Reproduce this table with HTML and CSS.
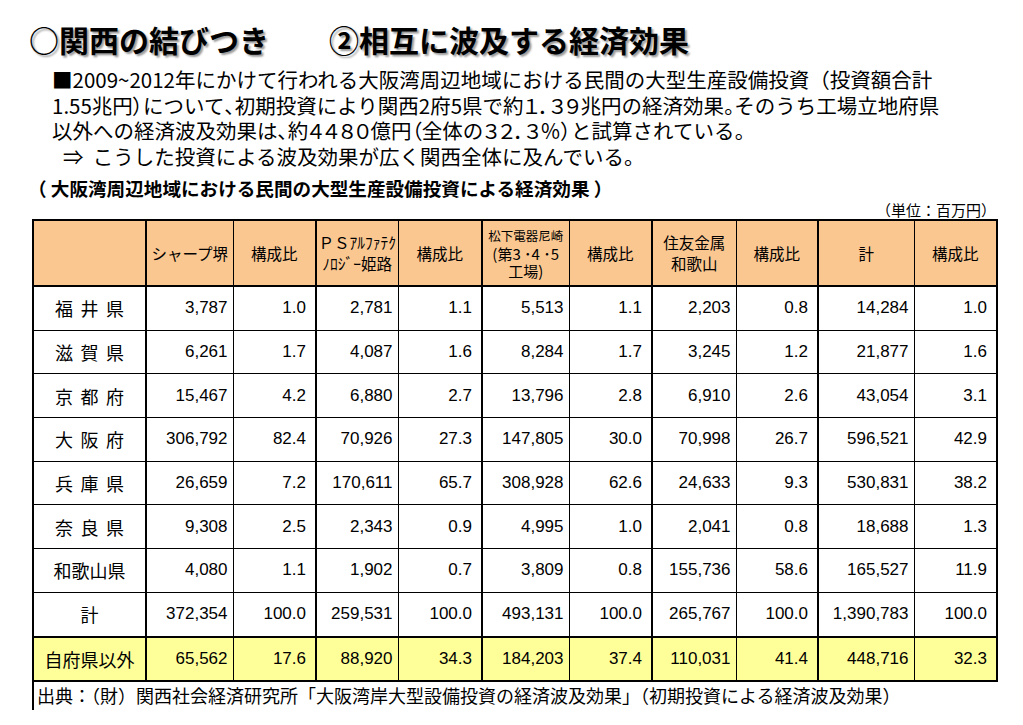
FILE: index.html
```html
<!DOCTYPE html>
<html lang="ja">
<head>
<meta charset="utf-8">
<title>関西の結びつき</title>
<link rel="stylesheet" href="styles.css">
</head>
<body>
<div class="slide">
  <h1 class="title">○関西の結びつき　　②相互に波及する経済効果</h1>
  <div class="lead">
    <p>■2009~2012年にかけて行われる大阪湾周辺地域における民間の大型生産設備投資（投資額合計</p>
    <p>1.55兆円<span class="pa">）</span>について<span class="pa">、</span>初期投資により関西2府5県で約<span class="pa">１．３９</span>兆円の経済効果<span class="pa">。</span>そのうち工場立地府県</p>
    <p>以外への経済波及効果は<span class="pa">、</span>約<span class="pa">４４８０</span>億円<span class="pa">（</span>全体の<span class="pa">３２．３％）</span>と試算されている<span class="pa">。</span></p>
    <p class="arrow">⇒&nbsp; こうした投資による波及効果が広く関西全体に及んでいる。</p>
  </div>
  <div class="caption">（ 大阪湾周辺地域における民間の大型生産設備投資による経済効果 ）</div>
  <div class="tablewrap">
    <div class="unit">（単位：百万円）</div>
    <table class="data">
      <colgroup>
        <col class="c-label"><col class="c-a"><col class="c-b"><col class="c-c"><col class="c-d"><col class="c-e"><col class="c-f"><col class="c-g"><col class="c-h"><col class="c-i"><col class="c-j">
      </colgroup>
      <thead>
        <tr>
          <th></th>
          <th>シャープ堺</th>
          <th>構成比</th>
          <th class="ps">ＰＳｱﾙﾌｧﾃｸ<br>ﾉﾛｼﾞｰ姫路</th>
          <th>構成比</th>
          <th class="mat"><span class="m1">松下電器尼崎</span><span class="m2">(第3 ･4 ･5</span><span class="m2">工場)</span></th>
          <th>構成比</th>
          <th class="two">住友金属<br>和歌山</th>
          <th>構成比</th>
          <th>計</th>
          <th>構成比</th>
        </tr>
      </thead>
      <tbody>
        <tr><td class="lab sp">福井県</td><td>3,787</td><td class="r">1.0</td><td>2,781</td><td class="r">1.1</td><td>5,513</td><td class="r">1.1</td><td>2,203</td><td class="r">0.8</td><td>14,284</td><td class="r">1.0</td></tr>
        <tr><td class="lab sp">滋賀県</td><td>6,261</td><td class="r">1.7</td><td>4,087</td><td class="r">1.6</td><td>8,284</td><td class="r">1.7</td><td>3,245</td><td class="r">1.2</td><td>21,877</td><td class="r">1.6</td></tr>
        <tr><td class="lab sp">京都府</td><td>15,467</td><td class="r">4.2</td><td>6,880</td><td class="r">2.7</td><td>13,796</td><td class="r">2.8</td><td>6,910</td><td class="r">2.6</td><td>43,054</td><td class="r">3.1</td></tr>
        <tr><td class="lab sp">大阪府</td><td>306,792</td><td class="r">82.4</td><td>70,926</td><td class="r">27.3</td><td>147,805</td><td class="r">30.0</td><td>70,998</td><td class="r">26.7</td><td>596,521</td><td class="r">42.9</td></tr>
        <tr><td class="lab sp">兵庫県</td><td>26,659</td><td class="r">7.2</td><td>170,611</td><td class="r">65.7</td><td>308,928</td><td class="r">62.6</td><td>24,633</td><td class="r">9.3</td><td>530,831</td><td class="r">38.2</td></tr>
        <tr><td class="lab sp">奈良県</td><td>9,308</td><td class="r">2.5</td><td>2,343</td><td class="r">0.9</td><td>4,995</td><td class="r">1.0</td><td>2,041</td><td class="r">0.8</td><td>18,688</td><td class="r">1.3</td></tr>
        <tr><td class="lab">和歌山県</td><td>4,080</td><td class="r">1.1</td><td>1,902</td><td class="r">0.7</td><td>3,809</td><td class="r">0.8</td><td>155,736</td><td class="r">58.6</td><td>165,527</td><td class="r">11.9</td></tr>
        <tr><td class="lab">計</td><td>372,354</td><td class="r">100.0</td><td>259,531</td><td class="r">100.0</td><td>493,131</td><td class="r">100.0</td><td>265,767</td><td class="r">100.0</td><td>1,390,783</td><td class="r">100.0</td></tr>
        <tr class="other"><td class="lab">自府県以外</td><td>65,562</td><td class="r">17.6</td><td>88,920</td><td class="r">34.3</td><td>184,203</td><td class="r">37.4</td><td>110,031</td><td class="r">41.4</td><td>448,716</td><td class="r">32.3</td></tr>
      </tbody>
    </table>
    <div class="source">出典：（財）関西社会経済研究所「大阪湾岸大型設備投資の経済波及効果」（初期投資による経済波及効果）</div>
  </div>
</div>
</body>
</html>
```

FILE: styles.css
```css
html, body {
  margin: 0;
  padding: 0;
  background: #ffffff;
}

body {
  color: #000000;
  font-family: "Noto Sans CJK JP", "Liberation Sans", sans-serif;
}

.slide {
  width: 1023px;
  height: 725px;
  overflow: hidden;
}

.title {
  margin: 0;
  padding: 21px 0 0 29px;
  font-size: 30px;
  line-height: 36px;
  font-weight: 700;
  white-space: nowrap;
  text-shadow: 2px 2px 2px #9a9a9a;
}

.lead {
  margin: 10px 0 0 52px;
  font-size: 20.5px;
  line-height: 25.5px;
}

.lead p {
  margin: 0;
  white-space: nowrap;
}

.lead .pa {
  font-feature-settings: "palt" 1;
}

.lead .arrow {
  padding-left: 11px;
}

.caption {
  margin: 7px 0 0 28px;
  font-size: 18.6px;
  line-height: 23px;
  font-weight: 700;
  white-space: nowrap;
}

.tablewrap {
  margin-left: 32px;
  width: 964px;
}

.unit {
  margin-top: 2px;
  text-align: right;
  font-size: 15px;
  line-height: 18px;
}

.data {
  border-collapse: collapse;
  table-layout: fixed;
  width: 964px;
  border: 2px solid #000;
}

.c-label { width: 113px; }
.c-a { width: 87px; }
.c-b { width: 83px; }
.c-c { width: 82px; }
.c-d { width: 84px; }
.c-e { width: 87px; }
.c-f { width: 83px; }
.c-g { width: 84px; }
.c-h { width: 82px; }
.c-i { width: 96px; }
.c-j { width: 83px; }

.data th,
.data td {
  border: 1px solid #000;
  padding: 0;
}

.data th:nth-child(2), .data td:nth-child(2),
.data th:nth-child(4), .data td:nth-child(4),
.data th:nth-child(6), .data td:nth-child(6),
.data th:nth-child(8), .data td:nth-child(8),
.data th:nth-child(10), .data td:nth-child(10) {
  border-left-width: 2px;
}

.data thead th {
  background: #fac791;
  height: 64px;
  font-size: 15.5px;
  font-weight: 400;
  line-height: 21px;
  text-align: center;
  vertical-align: middle;
  border-bottom-width: 2px;
}

.mat .m1 {
  display: block;
  font-size: 12.5px;
  line-height: 18px;
  white-space: nowrap;
}

.mat .m2 {
  display: block;
  font-size: 15px;
  line-height: 17px;
  white-space: pre;
}

.data td {
  height: 42.7px;
  font-family: "Liberation Sans", "Noto Sans CJK JP", sans-serif;
  font-size: 17px;
  text-align: right;
  padding-right: 5px;
  vertical-align: middle;
}

.data td.r {
  padding-right: 9px;
}

.data td.lab {
  font-family: "Noto Sans CJK JP", sans-serif;
  font-size: 18px;
  text-align: center;
  padding-right: 0;
}

.data td.sp {
  letter-spacing: 7.5px;
  text-indent: 7.5px;
}

.data tr.other td {
  background: #ffff99;
  border-top-width: 2px;
}

.source {
  border-left: 2px solid #000;
  height: 28px;
  padding-left: 3px;
  font-size: 18px;
  line-height: 26px;
  white-space: nowrap;
}
```
